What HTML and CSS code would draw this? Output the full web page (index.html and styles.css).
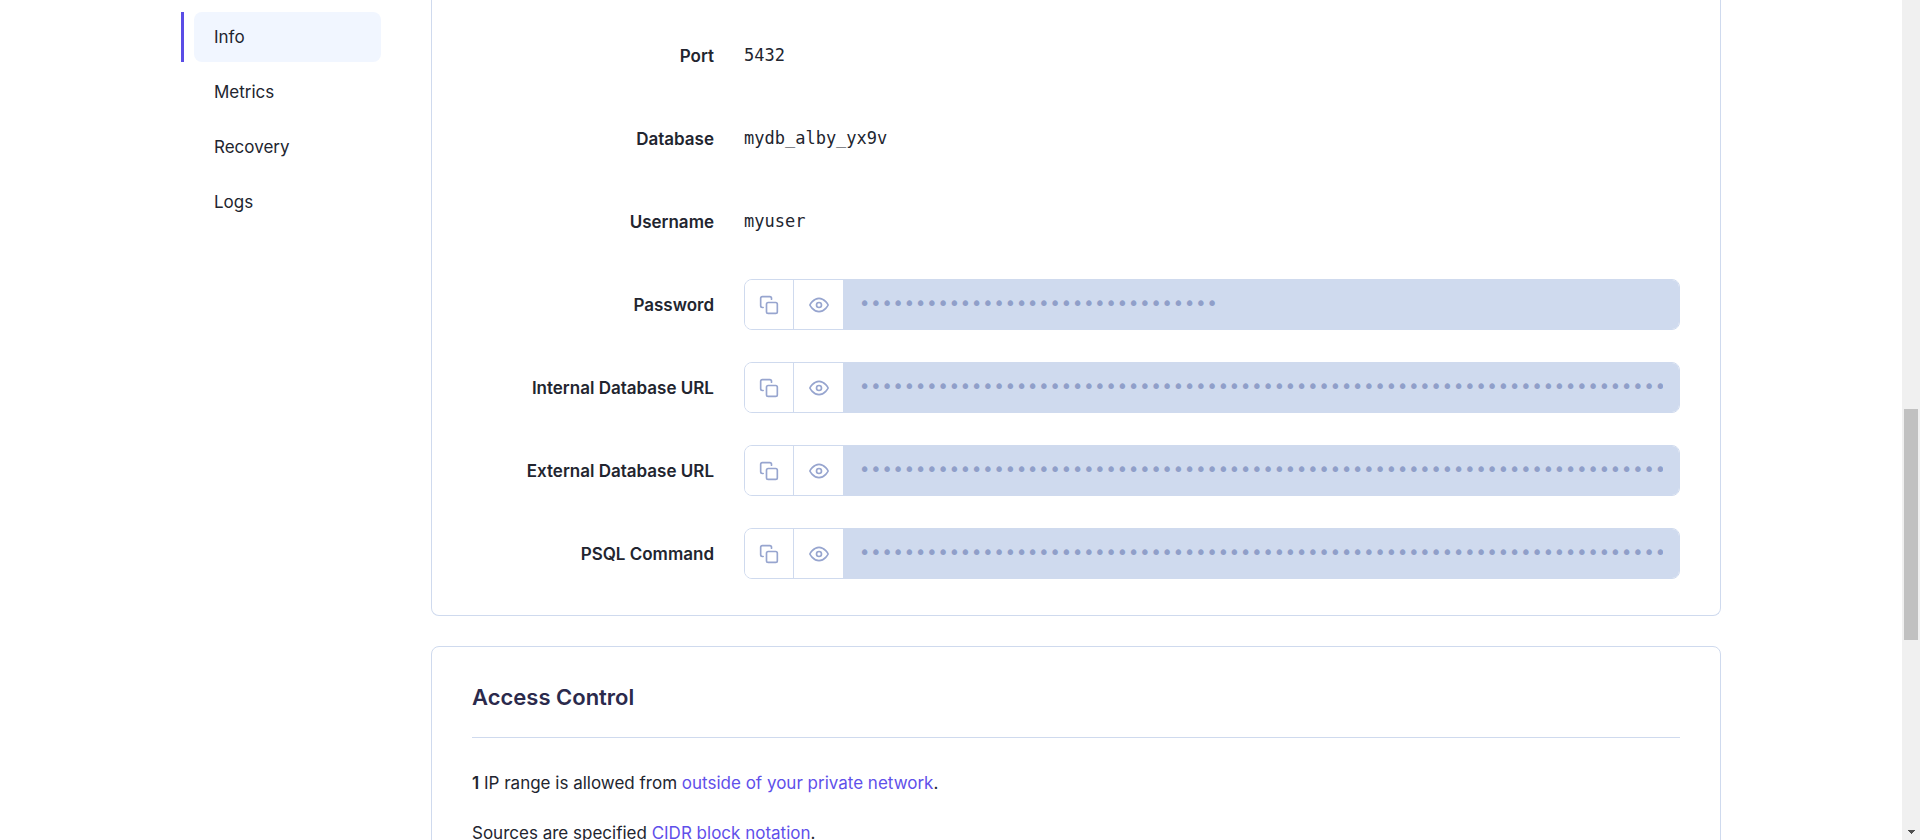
FILE: index.html
```html
<!DOCTYPE html>
<html lang="en">
<head>
<meta charset="utf-8">
<title>Database Info</title>
<link rel="stylesheet" href="styles.css">
</head>
<body>
<svg class="sprite" aria-hidden="true">
  <symbol id="copy" viewBox="0 0 24 24">
    <rect x="9" y="9" width="13" height="13" rx="2"/>
    <path d="M5 15H4a2 2 0 0 1-2-2V4a2 2 0 0 1 2-2h9a2 2 0 0 1 2 2v1"/>
  </symbol>
  <symbol id="eye" viewBox="0 0 24 24">
    <path d="M1 12s4-8 11-8 11 8 11 8-4 8-11 8-11-8-11-8z"/>
    <circle cx="12" cy="12" r="3"/>
  </symbol>
</svg>
<div class="viewport">
  <div class="page">
    <nav class="sidebar" aria-label="Database">
      <a class="nav-item active" href="#info"><span>Info</span></a>
      <a class="nav-item" href="#metrics"><span>Metrics</span></a>
      <a class="nav-item" href="#recovery"><span>Recovery</span></a>
      <a class="nav-item" href="#logs"><span>Logs</span></a>
    </nav>
    <main class="content">
      <section class="card connections" id="info">
        <div class="row"><span class="label">Port</span><code class="value">5432</code></div>
        <div class="row"><span class="label">Database</span><code class="value">mydb_alby_yx9v</code></div>
        <div class="row"><span class="label">Username</span><code class="value">myuser</code></div>
        <div class="row">
          <label class="label" for="password">Password</label>
          <div class="secret">
            <button type="button" aria-label="Copy password"><svg class="icon"><use href="#copy"/></svg></button>
            <button type="button" aria-label="Show password"><svg class="icon"><use href="#eye"/></svg></button>
            <input id="password" type="password" readonly value="********************************">
          </div>
        </div>
        <div class="row">
          <label class="label" for="internal">Internal Database URL</label>
          <div class="secret">
            <button type="button" aria-label="Copy internal URL"><svg class="icon"><use href="#copy"/></svg></button>
            <button type="button" aria-label="Show internal URL"><svg class="icon"><use href="#eye"/></svg></button>
            <input id="internal" type="password" readonly value="****************************************************************************************">
          </div>
        </div>
        <div class="row">
          <label class="label" for="external">External Database URL</label>
          <div class="secret">
            <button type="button" aria-label="Copy external URL"><svg class="icon"><use href="#copy"/></svg></button>
            <button type="button" aria-label="Show external URL"><svg class="icon"><use href="#eye"/></svg></button>
            <input id="external" type="password" readonly value="****************************************************************************************">
          </div>
        </div>
        <div class="row">
          <label class="label" for="psql">PSQL Command</label>
          <div class="secret">
            <button type="button" aria-label="Copy PSQL command"><svg class="icon"><use href="#copy"/></svg></button>
            <button type="button" aria-label="Show PSQL command"><svg class="icon"><use href="#eye"/></svg></button>
            <input id="psql" type="password" readonly value="****************************************************************************************">
          </div>
        </div>
      </section>
      <section class="card access">
        <h2>Access Control</h2>
        <p><strong>1</strong> IP range is allowed from <a href="#network">outside of your private network</a>.</p>
        <p>Sources are specified <a href="#cidr">CIDR block notation</a>.</p>
      </section>
    </main>
  </div>
  <div class="scrollbar" aria-hidden="true">
    <div class="thumb"></div>
    <svg class="arrow" viewBox="0 0 8 4" shape-rendering="crispEdges"><path d="M0 0h8L4 4z"/></svg>
  </div>
</div>
</body>
</html>
```
FILE: styles.css
```css
* {
  box-sizing: border-box;
}

body {
  margin: 0;
  background: #fff;
  color: #22252f;
  font-family: Inter, "Liberation Sans", sans-serif;
  font-size: 17px;
  line-height: 30px;
}

a {
  color: #5f50ea;
  text-decoration: none;
}

.sprite {
  display: none;
}

.viewport {
  display: grid;
  grid-template-columns: 1fr 18px;
  height: 100vh;
  overflow: hidden;
}

.page {
  display: grid;
  grid-template-columns: 200px minmax(0, 1fr);
  gap: 50px;
  align-items: start;
  width: 100%;
  max-width: 1540px;
  min-height: 0;
  margin: 0 auto;
}

.sidebar {
  display: flex;
  flex-direction: column;
  gap: 5px;
  padding-top: 12px;
}

.nav-item {
  border-left: 3px solid transparent;
  padding-left: 10px;
  color: inherit;
}

.nav-item span {
  display: block;
  padding: 10px 20px;
  border-radius: 8px;
}

.nav-item.active {
  border-left-color: #5a4de6;
}

.nav-item.active span {
  background: #f1f6ff;
}

.content {
  display: flex;
  flex-direction: column;
  gap: 30px;
}

.card {
  border: 1px solid #cfdaee;
  border-radius: 8px;
}

.connections {
  display: flex;
  flex-direction: column;
  gap: 32px;
  padding: 30px 40px 36px;
  border-top: 0;
  border-top-left-radius: 0;
  border-top-right-radius: 0;
}

.row {
  display: grid;
  grid-template-columns: 242px minmax(0, 1fr);
  gap: 30px;
  align-items: center;
  min-height: 51px;
}

.label {
  font-weight: 600;
  text-align: right;
}

.value {
  padding-bottom: 2px;
  font-family: "DejaVu Sans Mono", monospace;
  font-size: 17px;
}

.secret {
  display: flex;
  height: 51px;
  overflow: hidden;
  border: 1px solid #cfdaee;
  border-radius: 8px;
}

.secret button {
  display: flex;
  flex: none;
  align-items: center;
  justify-content: center;
  width: 48px;
  padding: 0;
  border: 0;
  background: #fff;
}

.secret button + button {
  width: 50px;
  border-left: 1px solid #cfdaee;
}

.icon {
  width: 20px;
  height: 20px;
  fill: none;
  stroke: #97a5cf;
  stroke-width: 2;
  stroke-linecap: round;
  stroke-linejoin: round;
}

.secret input {
  flex: 1;
  min-width: 0;
  padding: 0 16px 3px;
  border: 0;
  outline: 0;
  background: #cfdaee;
  color: #909fc9;
  font-family: "DejaVu Sans", sans-serif;
  font-size: 19px;
}

.access {
  padding: 35px 40px;
}

.access h2 {
  margin: 0 0 30px;
  padding-bottom: 25px;
  border-bottom: 1px solid #cfdaee;
  color: #2b2a4c;
  font-size: 22px;
  font-weight: 600;
}

.access p {
  margin: 0 0 20px;
}

.access strong {
  font-weight: 600;
}

.scrollbar {
  display: grid;
  grid-template-rows: 409fr 231fr 200fr;
  padding: 0 2px;
  background: #f0f0f0;
}

.thumb {
  grid-row: 2;
  background: #c1c1c1;
}

.arrow {
  grid-row: 3;
  align-self: end;
  justify-self: center;
  width: 8px;
  height: 4px;
  margin-bottom: 6px;
  fill: #505050;
}
```
